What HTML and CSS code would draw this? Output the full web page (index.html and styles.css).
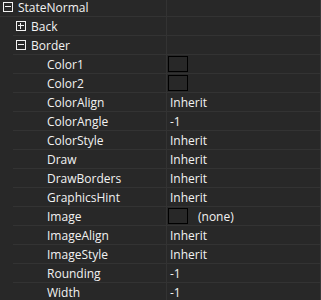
FILE: index.html
```html
<!DOCTYPE html>
<html lang="en">
<head>
  <meta charset="UTF-8" />
  <title>Property Grid</title>
  <link rel="stylesheet" href="styles.css">
</head>
<body>
  <div class="grid">
    <div class="row">
      <div class="name level-0"><span class="toggle minus"></span>StateNormal</div>
      <div class="value"></div>
    </div>
    <div class="row">
      <div class="name level-1"><span class="toggle plus"></span>Back</div>
      <div class="value"></div>
    </div>
    <div class="row">
      <div class="name level-1"><span class="toggle minus"></span>Border</div>
      <div class="value"></div>
    </div>
    <div class="row">
      <div class="name level-2">Color1</div>
      <div class="value"><span class="swatch"></span></div>
    </div>
    <div class="row">
      <div class="name level-2">Color2</div>
      <div class="value"><span class="swatch"></span></div>
    </div>
    <div class="row">
      <div class="name level-2">ColorAlign</div>
      <div class="value">Inherit</div>
    </div>
    <div class="row">
      <div class="name level-2">ColorAngle</div>
      <div class="value">-1</div>
    </div>
    <div class="row">
      <div class="name level-2">ColorStyle</div>
      <div class="value">Inherit</div>
    </div>
    <div class="row">
      <div class="name level-2">Draw</div>
      <div class="value">Inherit</div>
    </div>
    <div class="row">
      <div class="name level-2">DrawBorders</div>
      <div class="value">Inherit</div>
    </div>
    <div class="row">
      <div class="name level-2">GraphicsHint</div>
      <div class="value">Inherit</div>
    </div>
    <div class="row">
      <div class="name level-2">Image</div>
      <div class="value"><span class="swatch"></span><span class="note">(none)</span></div>
    </div>
    <div class="row">
      <div class="name level-2">ImageAlign</div>
      <div class="value">Inherit</div>
    </div>
    <div class="row">
      <div class="name level-2">ImageStyle</div>
      <div class="value">Inherit</div>
    </div>
    <div class="row">
      <div class="name level-2">Rounding</div>
      <div class="value">-1</div>
    </div>
    <div class="row">
      <div class="name level-2">Width</div>
      <div class="value">-1</div>
    </div>
  </div>
</body>
</html>
```

FILE: styles.css
```css
body {
  margin: 0;
  background-color: #282828;
  color: #f2f2f2;
  font-family: "Open Sans", "Noto Sans", sans-serif;
  font-size: 12px;
  height: 300px;
  overflow: hidden;
}
.grid {
  margin-top: -2px;
  border-right: 1px solid #3a3a3a;
  height: 310px;
}
.row {
  display: flex;
  height: 19px;
}
.name {
  width: 154px;
  margin-left: 13px;
  display: flex;
  align-items: center;
  box-sizing: border-box;
  border-bottom: 1px solid #333;
  border-right: 1px solid #333;
  white-space: nowrap;
}
.value {
  flex: 1;
  display: flex;
  align-items: center;
  padding-left: 3px;
  border-bottom: 1px solid #333;
}
.level-0 {
  margin-left: 0;
  width: 167px;
  padding-left: 3px;
}
.level-1 {
  padding-left: 3px;
}
.level-2 {
  padding-left: 34px;
}
.toggle {
  width: 10px;
  height: 10px;
  box-sizing: border-box;
  border: 1px solid #f2f2f2;
  position: relative;
  margin-right: 5px;
  flex-shrink: 0;
}
.toggle::before {
  content: "";
  position: absolute;
  left: 1px;
  right: 1px;
  top: 3px;
  height: 1px;
  background: #f2f2f2;
}
.plus::after {
  content: "";
  position: absolute;
  top: 1px;
  bottom: 1px;
  left: 3px;
  width: 1px;
  background: #f2f2f2;
}
.swatch {
  width: 20px;
  height: 16px;
  box-sizing: border-box;
  border: 1px solid #000;
  margin-left: -2px;
}
.note {
  margin-left: 10px;
}
```
